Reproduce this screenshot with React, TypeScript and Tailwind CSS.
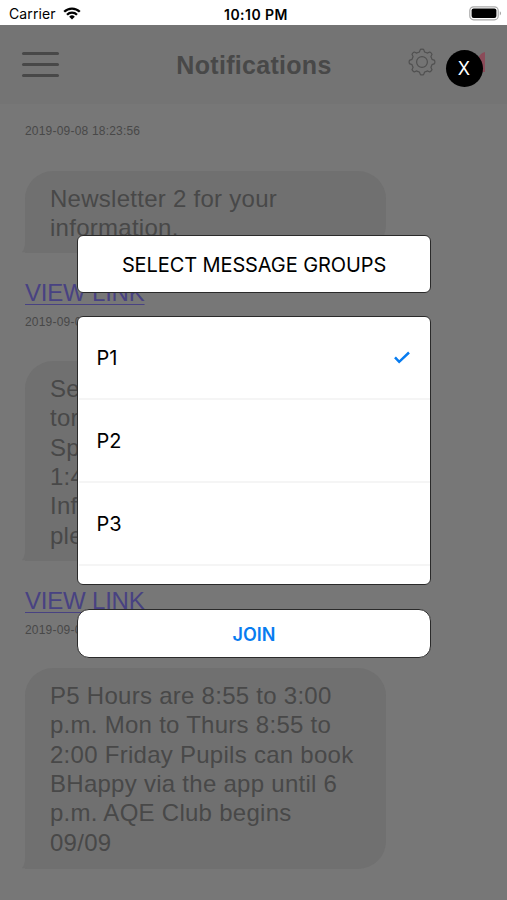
import { useState } from 'react'

interface Message {
  lines: string[]
  date: string
  className: string
}

const messages: Message[] = [
  {
    date: '2019-09-08 18:23:56',
    lines: ['Newsletter 2 for your', 'information.'],
    className: 'mt-[32px] h-[82px]',
  },
  {
    date: '2019-09-0',
    lines: ['Se', 'tor', 'Sp', '1:4', 'Inf', 'ple'],
    className: 'mt-[31px] h-[200px]',
  },
  {
    date: '2019-09-0',
    lines: [
      'P5 Hours are 8:55 to 3:00',
      'p.m. Mon to Thurs 8:55 to',
      '2:00 Friday Pupils can book',
      'BHappy via the app until 6',
      'p.m. AQE Club begins',
      '09/09',
    ],
    className: 'mt-[30px] h-[201px]',
  },
]

const groups = ['P1', 'P2', 'P3']

function StatusBar() {
  return (
    <div className="flex h-[25px] shrink-0 items-center justify-between bg-white pt-[2px] pr-[5px] pl-[9px] font-['Inter',sans-serif] text-black">
      <div className="flex w-[160px] items-center gap-[7px]">
        <span className="text-[14px] tracking-[0.1px]">Carrier</span>
        <svg width="18" height="13" viewBox="0 0 18 13" fill="none" stroke="#000" strokeWidth="2.3">
          <path d="M1.2 4.8a11 11 0 0 1 15.6 0" />
          <path d="M4 7.7a7.1 7.1 0 0 1 10 0" />
          <path d="M9 12.5 6.2 9.7a4 4 0 0 1 5.6 0z" fill="#000" stroke="none" />
        </svg>
      </div>
      <span className="pt-px pl-[1px] text-[14px] font-semibold tracking-[0.45px] whitespace-nowrap">10:10 PM</span>
      <div className="flex w-[160px] justify-end">
        <svg width="33" height="15" viewBox="0 0 33 15">
          <rect x="0.8" y="0.8" width="28.4" height="13" rx="3.8" fill="#fff" stroke="#aaa" strokeWidth="1.2" />
          <rect x="2.6" y="2.6" width="24.8" height="9.4" rx="2" />
          <path d="M30.8 5.2c1.5.6 1.5 3.6 0 4.2z" fill="#999" />
        </svg>
      </div>
    </div>
  )
}

function GearIcon() {
  return (
    <svg width="28" height="28" viewBox="-14 -14 28 28" fill="none" stroke="#505050" strokeWidth="1.2" strokeLinejoin="round">
      <path d="M-1.6-12.6Q0-13.2 1.6-12.6L2.6-10Q4-9.6 5.2-8.9L7.8-10Q9.2-9.2 10-7.8L8.9-5.2Q9.6-4 10-2.6L12.6-1.6Q13.2 0 12.6 1.6L10 2.6Q9.6 4 8.9 5.2L10 7.8Q9.2 9.2 7.8 10L5.2 8.9Q4 9.6 2.6 10L1.6 12.6Q0 13.2-1.6 12.6L-2.6 10Q-4 9.6-5.2 8.9L-7.8 10Q-9.2 9.2-10 7.8L-8.9 5.2Q-9.6 4-10 2.6L-12.6 1.6Q-13.2 0-12.6-1.6L-10-2.6Q-9.6-4-8.9-5.2L-10-7.8Q-9.2-9.2-7.8-10L-5.2-8.9Q-4-9.6-2.6-10Z" />
      <circle r="5.4" />
    </svg>
  )
}

function Header() {
  return (
    <header className="flex h-[79px] shrink-0 items-center justify-between bg-[#747474] pr-[22px] pl-[22px]">
      <button type="button" aria-label="Menu" className="flex w-[78px] flex-col gap-[8px]">
        <span className="h-[3px] w-[37px] rounded-full bg-[#484848]" />
        <span className="h-[3px] w-[37px] rounded-full bg-[#484848]" />
        <span className="h-[3px] w-[37px] rounded-full bg-[#484848]" />
      </button>
      <h1 className="text-[25px] leading-[30px] font-bold tracking-[0.3px] text-[#484848]">Notifications</h1>
      <div className="flex w-[77px] items-center justify-between pb-[6px]">
        <GearIcon />
        <svg width="22" height="22" viewBox="0 0 22 22">
          <path d="M22 1v20H6L17 4Q19 1.5 22 1z" fill="#8b4b59" />
        </svg>
      </div>
    </header>
  )
}

function Bubble({ lines, className }: { lines: string[]; className: string }) {
  return (
    <div className={`relative ml-[25px] w-[361px] rounded-[28px] rounded-bl-none bg-[#707070] pt-[13px] pl-[25px] ${className}`}>
      {lines.map((line) => (
        <p key={line} className="h-[29.35px] text-[24px] leading-[29.35px] tracking-[0.27px] whitespace-nowrap text-[#484848]">
          {line}
        </p>
      ))}
      {/* tail */}
      <svg className="absolute bottom-0 -left-[3px]" width="10" height="12" viewBox="0 0 10 12">
        <path d="M3 0Q3 8 0 11Q6 12 10 8V0z" fill="#707070" />
      </svg>
    </div>
  )
}

function JoinModal({ onClose }: { onClose: () => void }) {
  const [selected, setSelected] = useState<string[]>(['P1'])

  const toggle = (group: string) => {
    setSelected((prev) => (prev.includes(group) ? prev.filter((g) => g !== group) : [...prev, group]))
  }

  return (
    <div className="absolute inset-0 font-['Inter',sans-serif] text-black">
      <button
        type="button"
        onClick={onClose}
        className="absolute top-[49.5px] left-[445.5px] flex h-[37px] w-[37px] items-center justify-center rounded-full bg-black pt-px text-[18px] text-white"
      >
        X
      </button>
      <div className="flex flex-col pt-[235px] pr-[76px] pl-[77px]">
        <div className="flex h-[58px] items-center justify-center rounded-[6px] border-[1.5px] border-[#2a2a2a] bg-white pt-px">
          <h2 className="text-[20px] tracking-[-0.1px]">SELECT MESSAGE GROUPS</h2>
        </div>
        <div className="mt-[23px] h-[269px] overflow-hidden rounded-[6px] border-[1.5px] border-[#2a2a2a] bg-white pl-px">
          {groups.map((group) => (
            <button
              key={group}
              type="button"
              onClick={() => toggle(group)}
              className="flex h-[83px] w-full items-center justify-between border-b-2 border-[#f5f5f5] pr-[19px] pl-[17.5px] text-[20px]"
            >
              {group}
              {selected.includes(group) && (
                <svg width="17" height="14" viewBox="0 0 17 14" fill="none" stroke="#087cf0" strokeWidth="2.5">
                  <path d="m1 6.3 4.2 4.5 9.8-9.3" />
                </svg>
              )}
            </button>
          ))}
        </div>
        <button
          type="button"
          className="mt-[24px] flex h-[49px] items-center justify-center rounded-[12px] border-[1.5px] border-[#2a2a2a] bg-white pt-px text-[18px] font-semibold text-[#087cf0]"
        >
          JOIN
        </button>
      </div>
    </div>
  )
}

export default function App() {
  const [open, setOpen] = useState(true)

  return (
    <div className="relative flex h-[900px] w-[507px] flex-col overflow-hidden bg-[#777] font-['Liberation_Sans',Arial,sans-serif]">
      <StatusBar />
      <Header />
      <main className="pt-[19px]">
        {messages.map((message, i) => (
          <section key={i}>
            <p className="ml-[25px] h-[16px] text-[12px] leading-[16px] tracking-[0.2px] text-[#484848]">{message.date}</p>
            <Bubble lines={message.lines} className={message.className} />
            {i < messages.length - 1 && (
              <a
                href="#"
                className="mt-[25px] mb-[6px] ml-[25px] block h-[30px] w-fit text-[24px] leading-[30px] tracking-[-0.2px] text-[#484282] underline decoration-1 underline-offset-[3px]"
              >
                VIEW LINK
              </a>
            )}
          </section>
        ))}
      </main>
      {open && <JoinModal onClose={() => setOpen(false)} />}
    </div>
  )
}
